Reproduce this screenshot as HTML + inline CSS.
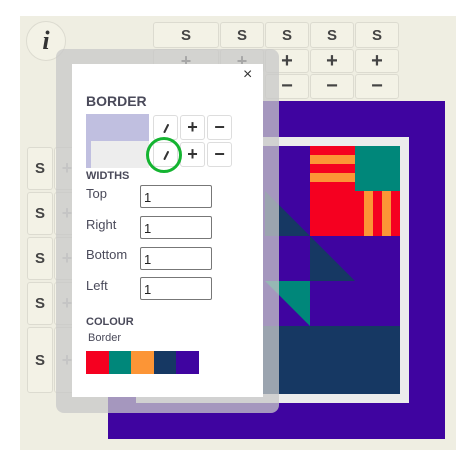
<!DOCTYPE html>
<html><head><style>
*{margin:0;padding:0;box-sizing:border-box}
body{width:472px;height:470px;background:#fff;position:relative;overflow:hidden;font-family:"Liberation Sans",sans-serif}
.a{position:absolute}
.b{position:absolute;background:#f3f2e6;border:1px solid #dcdbd0;border-radius:3px;color:#444;font-weight:bold;font-size:15px;display:flex;align-items:center;justify-content:center}
.w{position:absolute;background:#fff;border:1px solid #ddd;border-radius:3px;color:#333;font-weight:bold;font-size:18px;display:flex;align-items:center;justify-content:center}
.lbl{position:absolute;left:86px;font-size:13px;color:#4a4a5a}
.in{position:absolute;left:140px;width:72px;height:23px;border:1px solid #777;border-radius:2px;font-size:13px;padding:4px 3px;color:#222}
</style></head><body>
<div class="a" style="left:20px;top:16px;width:436px;height:434px;background:#efeee2"></div>
<div class="a" style="left:26px;top:21px;width:40px;height:40px;border-radius:50%;border:1px solid #dcdbd0;background:#f3f2e6;font-family:'Liberation Serif',serif;font-style:italic;font-weight:bold;font-size:26px;color:#333;text-align:center;line-height:38px">i</div>
<div class="b" style="left:153px;top:22px;width:66px;height:26px">S</div>
<div class="b" style="left:220px;top:22px;width:44px;height:26px">S</div>
<div class="b" style="left:265px;top:22px;width:44px;height:26px">S</div>
<div class="b" style="left:310px;top:22px;width:44px;height:26px">S</div>
<div class="b" style="left:355px;top:22px;width:44px;height:26px">S</div>
<div class="b" style="left:153px;top:49px;width:66px;height:24px;font-size:18px">+</div>
<div class="b" style="left:220px;top:49px;width:44px;height:24px;font-size:18px">+</div>
<div class="b" style="left:265px;top:49px;width:44px;height:24px;font-size:20px">+</div>
<div class="b" style="left:310px;top:49px;width:44px;height:24px;font-size:20px">+</div>
<div class="b" style="left:355px;top:49px;width:44px;height:24px;font-size:20px">+</div>
<div class="b" style="left:265px;top:74px;width:44px;height:25px;font-size:20px">−</div>
<div class="b" style="left:310px;top:74px;width:44px;height:25px;font-size:20px">−</div>
<div class="b" style="left:355px;top:74px;width:44px;height:25px;font-size:20px">−</div>
<div class="b" style="left:27px;top:147px;width:26px;height:43px">S</div>
<div class="b" style="left:27px;top:192px;width:26px;height:43px">S</div>
<div class="b" style="left:27px;top:237px;width:26px;height:43px">S</div>
<div class="b" style="left:27px;top:282px;width:26px;height:43px">S</div>
<div class="b" style="left:27px;top:327px;width:26px;height:66px">S</div>
<div class="b" style="left:54px;top:147px;width:26px;height:43px;color:#bbb;font-size:18px">+</div>
<div class="b" style="left:54px;top:192px;width:26px;height:43px;color:#bbb;font-size:18px">+</div>
<div class="b" style="left:54px;top:237px;width:26px;height:43px;color:#bbb;font-size:18px">+</div>
<div class="b" style="left:54px;top:282px;width:26px;height:43px;color:#bbb;font-size:18px">+</div>
<div class="b" style="left:54px;top:327px;width:26px;height:66px;color:#bbb;font-size:18px">+</div>
<div class="a" style="left:108px;top:101px;width:337px;height:338px;background:#3f04a0"></div>
<div class="a" style="left:136px;top:137px;width:273px;height:266px;background:#ececec"></div>
<svg class="a" style="left:145px;top:146px" width="255" height="248" viewBox="145 146 255 248">
<rect x="145" y="146" width="255" height="248" fill="#3f04a0"/>
<rect x="310" y="146" width="45" height="90" fill="#f50020"/>
<rect x="355" y="191" width="45" height="45" fill="#f50020"/>
<rect x="310" y="155" width="45" height="9" fill="#fc9536"/>
<rect x="310" y="173" width="45" height="9" fill="#fc9536"/>
<rect x="355" y="146" width="45" height="45" fill="#00877a"/>
<rect x="364" y="191" width="9" height="45" fill="#fc9536"/>
<rect x="382" y="191" width="9" height="45" fill="#fc9536"/>
<polygon points="265,191 310,236 265,236" fill="#163863"/>
<polygon points="310,236 355,281 310,281" fill="#163863"/>
<polygon points="265,281 310,281 310,326" fill="#00877a"/>
<rect x="145" y="326" width="255" height="68" fill="#163863"/>
</svg>
<div class="a" style="left:56px;top:49px;width:223px;height:364px;border-radius:8px;background:rgba(200,200,200,0.75)"></div>
<div class="a" style="left:72px;top:64px;width:191px;height:333px;background:#fff"></div>
<div class="a" style="left:243px;top:66px;font-size:16px;color:#333">×</div>
<div class="a" style="left:86px;top:93px;font-size:14px;font-weight:bold;color:#4a4a5a">BORDER</div>
<div class="a" style="left:86px;top:114px;width:63px;height:54px;background:#c0bfe0"></div>
<div class="a" style="left:91px;top:141px;width:58px;height:27px;background:#ededed"></div>
<div class="w" style="left:153px;top:115px;width:25px;height:25px"><svg width="12" height="14"><path d="M4.5 11 L8 4" stroke="#333" stroke-width="2" stroke-linecap="round"/></svg></div>
<div class="w" style="left:180px;top:115px;width:25px;height:25px">+</div>
<div class="w" style="left:207px;top:115px;width:25px;height:25px">−</div>
<div class="w" style="left:153px;top:142px;width:25px;height:25px"><svg width="12" height="14"><path d="M4.5 11 L8 4" stroke="#333" stroke-width="2" stroke-linecap="round"/></svg></div>
<div class="w" style="left:180px;top:142px;width:25px;height:25px">+</div>
<div class="w" style="left:207px;top:142px;width:25px;height:25px">−</div>
<div class="a" style="left:146px;top:137px;width:36px;height:36px;border:3px solid #14b431;border-radius:50%"></div>
<div class="a" style="left:86px;top:170px;font-size:11px;font-weight:bold;color:#4a4a5a">WIDTHS</div>
<div class="lbl" style="top:186px">Top</div>
<div class="lbl" style="top:217px">Right</div>
<div class="lbl" style="top:247px">Bottom</div>
<div class="lbl" style="top:278px">Left</div>
<div class="in" style="top:185px">1</div>
<div class="in" style="top:216px">1</div>
<div class="in" style="top:247px">1</div>
<div class="in" style="top:277px">1</div>
<div class="a" style="left:86px;top:316px;font-size:11px;font-weight:bold;color:#4a4a5a">COLOUR</div>
<div class="a" style="left:88px;top:332px;font-size:11px;color:#4a4a5a">Border</div>
<div class="a" style="left:86px;top:351px;width:23px;height:23px;background:#f50020"></div>
<div class="a" style="left:109px;top:351px;width:22px;height:23px;background:#00877a"></div>
<div class="a" style="left:131px;top:351px;width:23px;height:23px;background:#fc9536"></div>
<div class="a" style="left:154px;top:351px;width:22px;height:23px;background:#163863"></div>
<div class="a" style="left:176px;top:351px;width:23px;height:23px;background:#3f04a0"></div>
</body></html>
